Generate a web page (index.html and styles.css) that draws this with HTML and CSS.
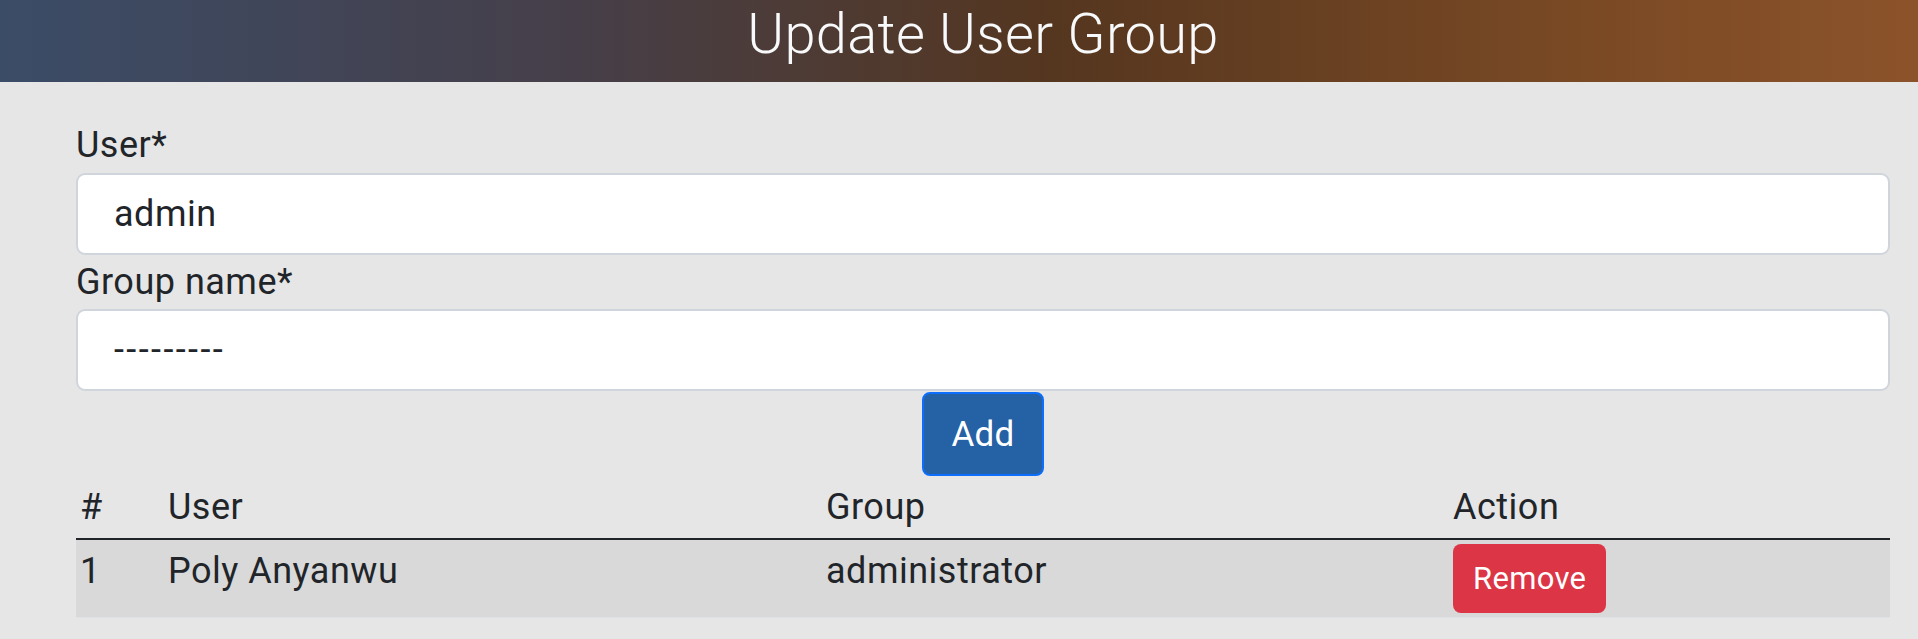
FILE: index.html
```html
<!DOCTYPE html>
<html lang="en">
<head>
<meta charset="utf-8">
<title>Update User Group</title>
<link rel="stylesheet" href="styles.css">
</head>
<body>
<header class="topbar">
  <h1 class="title">Update User Group</h1>
</header>
<main class="main">
  <form class="form">
    <label class="label" for="user">User*</label>
    <input class="field" id="user" type="text" value="admin">
    <label class="label" for="group">Group name*</label>
    <input class="field field-select" id="group" type="text" value="---------">
    <div class="actions">
      <button type="button" class="btn btn-add">Add</button>
    </div>
  </form>
  <table class="table">
    <colgroup>
      <col class="c-num">
      <col class="c-user">
      <col class="c-group">
      <col>
    </colgroup>
    <thead>
      <tr><th>#</th><th>User</th><th>Group</th><th>Action</th></tr>
    </thead>
    <tbody>
      <tr>
        <td>1</td>
        <td>Poly Anyanwu</td>
        <td>administrator</td>
        <td><button type="button" class="btn btn-remove">Remove</button></td>
      </tr>
    </tbody>
  </table>
</main>
</body>
</html>
```
FILE: styles.css
```css
* { box-sizing: border-box; }
html, body { margin: 0; padding: 0; }
body {
  background: #e6e6e6;
  color: #212529;
  font-family: Roboto, "Noto Sans", sans-serif;
  font-size: 36px;
  letter-spacing: 0.5px;
}
.topbar {
  height: 82px;
  background: linear-gradient(to right, #3b4c67 0%, #463f49 30%, #55361f 55%, #774824 80%, #8c532a 100%);
  text-align: center;
  padding: 0 28px 14px 76px;
}
.title {
  margin: 0;
  font-size: 56px;
  font-weight: 300;
  line-height: 68px;
  letter-spacing: 0.3px;
  color: #f8f9fa;
}
.main {
  padding: 36px 28px 0 76px;
}
.form { display: flex; flex-direction: column; }
.label {
  display: block;
  line-height: 54.5px;
  font-size: 36px;
}
.field {
  display: block;
  width: 100%;
  height: 82px;
  border: 2px solid #d0d5db;
  border-radius: 9px;
  background: #fff;
  padding: 0 36px;
  font-family: inherit;
  font-size: 36px;
  letter-spacing: 0.5px;
  color: #212529;
  outline: none;
}
.field-select {
  letter-spacing: 2.4px;
}
.actions {
  display: flex;
  justify-content: center;
  padding-top: 1px;
}
.btn {
  font-family: inherit;
  color: #fff;
  border-radius: 8px;
  cursor: pointer;
  letter-spacing: 0.3px;
}
.btn-add {
  width: 122px;
  height: 84px;
  background: #2561a5;
  border: 2px solid #0d6efd;
  font-size: 35px;
  padding: 0;
}
.table {
  width: 100%;
  border-collapse: collapse;
  table-layout: fixed;
}
.c-num { width: 88px; }
.c-user { width: 658px; }
.c-group { width: 627px; }
.table th, .table td {
  text-align: left;
  vertical-align: top;
  padding: 4px 4px;
  font-size: 36px;
  line-height: 54px;
  font-weight: 400;
}
.table thead th {
  border-bottom: 2px solid #212529;
}
.table tbody tr {
  background: #d9d9d9;
  border-bottom: 1px solid #dfe2e6;
}
.table tbody td {
  height: 75px;
}
.btn-remove {
  display: block;
  height: 69px;
  padding: 0 20px;
  background: #dc3545;
  border: none;
  font-size: 31px;
}
```
